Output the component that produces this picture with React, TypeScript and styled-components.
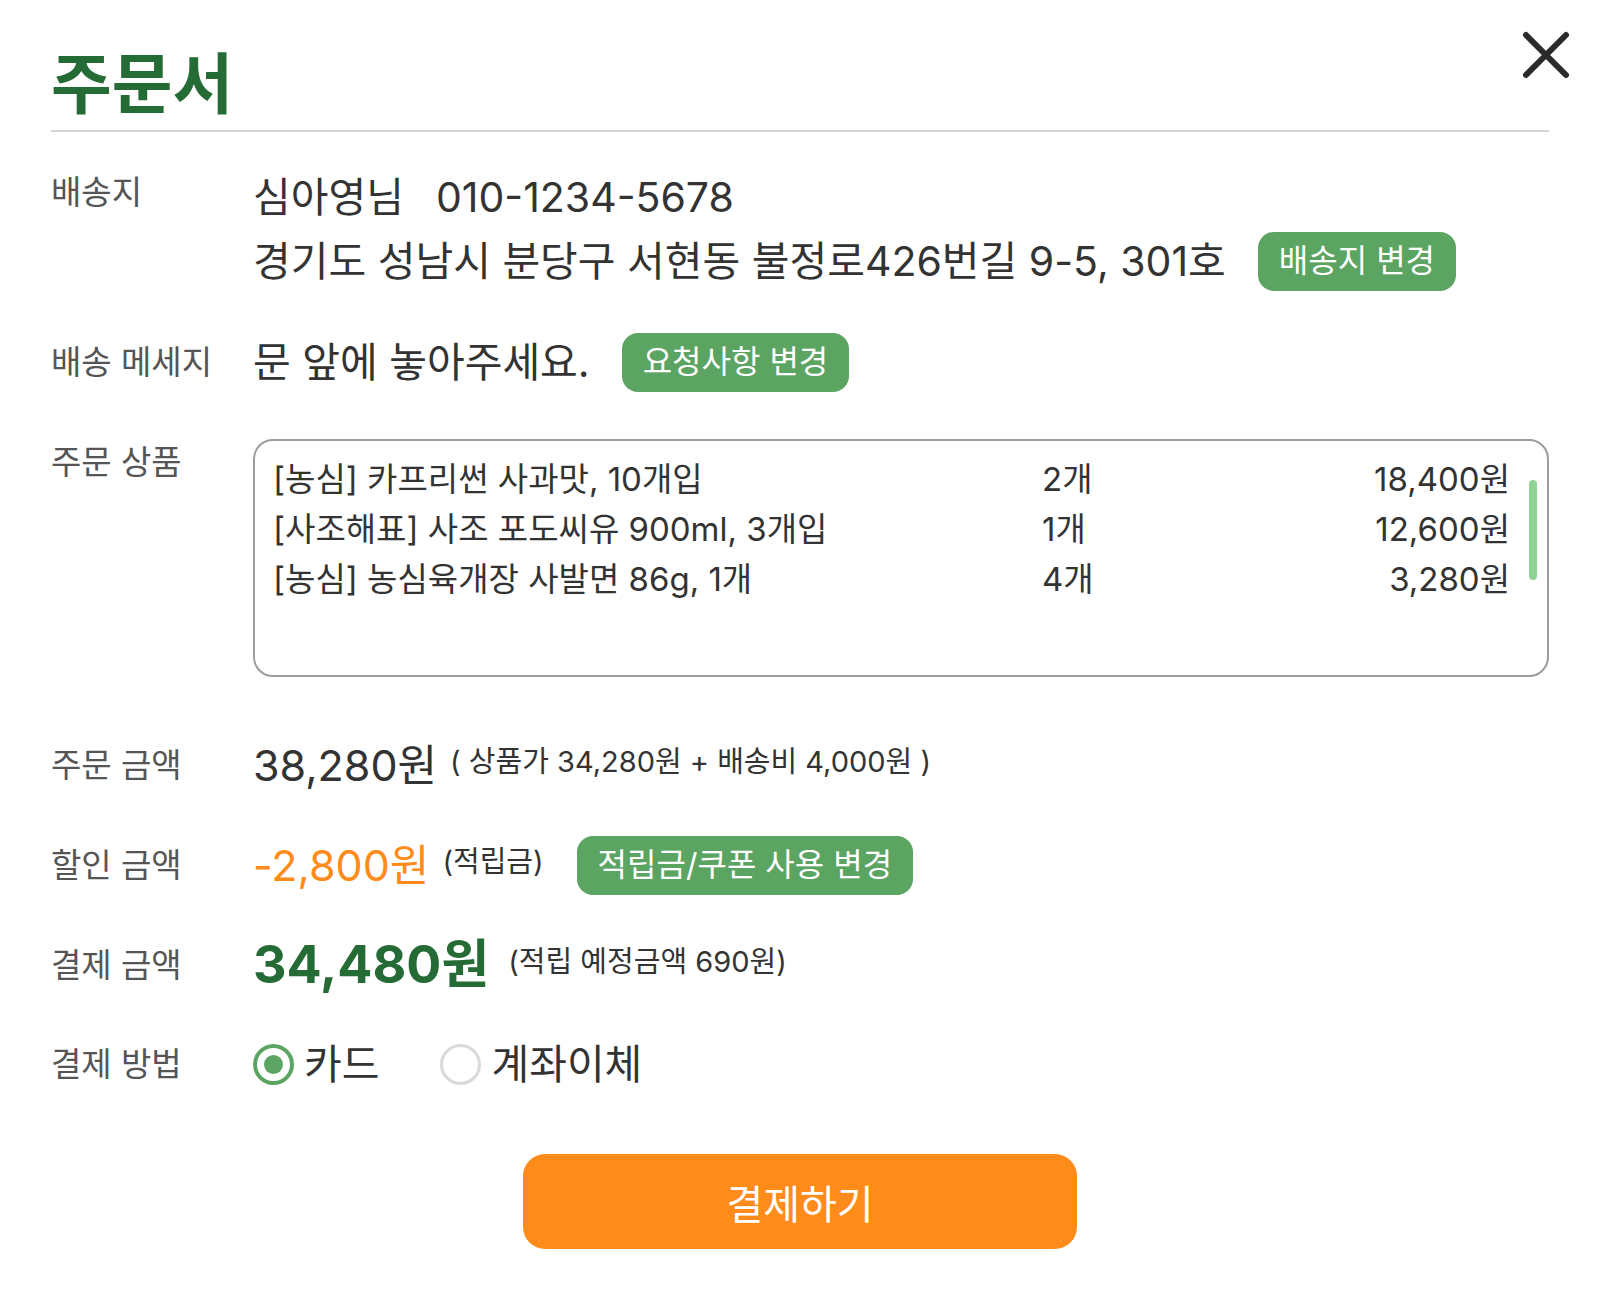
import styled, { createGlobalStyle } from 'styled-components'

const GlobalStyle = createGlobalStyle`
  html,
  body {
    margin: 0;
    background: #fff;
  }

  body {
    font-family: "Inter", "Noto Sans CJK KR", "Noto Sans", sans-serif;
    color: #333;
  }

  * {
    box-sizing: border-box;
  }
`

const Sheet = styled.div`
  position: relative;
  width: 1600px;
  min-height: 1300px;
  padding: 0 51px;
`

const Header = styled.header`
  padding: 46px 0 18px;
  border-bottom: 2px solid #d6d6d6;
`

const Title = styled.h1`
  margin: 0;
  font-family: "Noto Sans CJK KR", sans-serif;
  font-size: 66px;
  line-height: 66px;
  font-weight: 700;
  color: #256b35;
`

const CloseButton = styled.button`
  position: absolute;
  top: 31px;
  right: 30px;
  width: 48px;
  height: 48px;
  padding: 0;
  border: none;
  background: transparent;
  cursor: pointer;

  > svg {
    display: block;
  }
`

const Form = styled.div`
  display: flex;
  flex-direction: column;
  padding-top: 33px;
`

const Row = styled.div<{ $gap?: number }>`
  display: flex;
  align-items: flex-start;
  margin-top: ${({ $gap }) => $gap ?? 0}px;
`

const Label = styled.div<{ $lh?: number }>`
  width: 202px;
  flex-shrink: 0;
  font-size: 33px;
  line-height: ${({ $lh }) => $lh ?? 64}px;
  color: #555;
`

const Value = styled.div`
  flex: 1;
  display: flex;
  flex-direction: column;
  font-size: 41px;
  line-height: 64px;
  color: #333;
`

const Line = styled.div<{ $gap?: number }>`
  display: flex;
  align-items: center;
  gap: ${({ $gap }) => $gap ?? 32}px;
  white-space: nowrap;
`

const GreenButton = styled.button<{ $push?: number }>`
  height: 59px;
  padding: 0 21px;
  margin-left: ${({ $push }) => $push ?? 0}px;
  border: none;
  border-radius: 16px;
  background: #5ba462;
  color: #fff;
  font-family: inherit;
  font-size: 32px;
  line-height: 1;
  white-space: nowrap;
  cursor: pointer;
`

const ItemBox = styled.div`
  flex: 1;
  height: 238px;
  display: flex;
  gap: 19px;
  padding: 13px 10px 0 18px;
  border: 2px solid #9d9d9d;
  border-radius: 20px;
`

const ItemList = styled.div`
  flex: 1;
  display: grid;
  grid-template-columns: 769px 1fr auto;
  align-content: start;
  font-size: 33px;
  line-height: 50px;
  color: #333;

  > span:nth-child(3n) {
    text-align: right;
  }
`

const ScrollThumb = styled.div`
  width: 8px;
  height: 100px;
  margin-top: 26px;
  border-radius: 4px;
  background: #8fd394;
`

const Amount = styled.span<{ $tone?: 'plain' | 'discount' | 'total' }>`
  font-size: ${({ $tone }) => ($tone === 'total' ? 52 : 43)}px;
  font-weight: ${({ $tone }) => ($tone === 'total' ? 700 : 400)};
  color: ${({ $tone }) =>
    $tone === 'discount' ? '#ff8c1a' : $tone === 'total' ? '#256b35' : '#333'};
`

const Note = styled.span`
  font-size: 29px;
  color: #333;
  position: relative;
  top: -3px;
`

const RadioGroup = styled.div`
  display: flex;
  align-items: center;
  gap: 61px;
  font-size: 41px;
  line-height: 64px;
  color: #333;
`

const RadioOption = styled.label`
  display: flex;
  align-items: center;
  gap: 10px;
  cursor: pointer;
`

const RadioMark = styled.span<{ $checked?: boolean }>`
  position: relative;
  width: 41px;
  height: 41px;
  border-radius: 50%;
  border: ${({ $checked }) => ($checked ? '4px solid #5ba462' : '3px solid #d9d9d9')};

  &::after {
    content: '';
    display: ${({ $checked }) => ($checked ? 'block' : 'none')};
    position: absolute;
    inset: 7px;
    border-radius: 50%;
    background: #5ba462;
  }
`

const PayButton = styled.button`
  display: block;
  width: 554px;
  height: 95px;
  margin: 58px auto 0;
  border: none;
  border-radius: 22px;
  background: #ff8c1a;
  color: #fff;
  font-family: inherit;
  font-size: 40px;
  cursor: pointer;
`

const items = [
  { name: '[농심] 카프리썬 사과맛, 10개입', qty: '2개', price: '18,400원' },
  { name: '[사조해표] 사조 포도씨유 900ml, 3개입', qty: '1개', price: '12,600원' },
  { name: '[농심] 농심육개장 사발면 86g, 1개', qty: '4개', price: '3,280원' },
]

export default function App() {
  return (
    <Sheet>
      <GlobalStyle />
      <Header>
        <Title>주문서</Title>
      </Header>
      <CloseButton aria-label="닫기">
        <svg width="48" height="48" viewBox="0 0 48 48">
          <path
            d="M4 4 L44 44 M44 4 L4 44"
            stroke="#2a2a2a"
            strokeWidth="6"
            strokeLinecap="round"
          />
        </svg>
      </CloseButton>

      <Form>
        <Row>
          <Label $lh={54}>배송지</Label>
          <Value>
            <Line>
              <span>심아영님</span>
              <span>010-1234-5678</span>
            </Line>
            <Line>
              <span>경기도 성남시 분당구 서현동 불정로426번길 9-5, 301호</span>
              <GreenButton>배송지 변경</GreenButton>
            </Line>
          </Value>
        </Row>

        <Row $gap={37}>
          <Label>배송 메세지</Label>
          <Value>
            <Line>
              <span>문 앞에 놓아주세요.</span>
              <GreenButton>요청사항 변경</GreenButton>
            </Line>
          </Value>
        </Row>

        <Row $gap={45}>
          <Label $lh={46}>주문 상품</Label>
          <ItemBox>
            <ItemList>
              {items.map((item) => [
                <span key={`${item.name}-n`}>{item.name}</span>,
                <span key={`${item.name}-q`}>{item.qty}</span>,
                <span key={`${item.name}-p`}>{item.price}</span>,
              ])}
            </ItemList>
            <ScrollThumb />
          </ItemBox>
        </Row>

        <Row $gap={56}>
          <Label>주문 금액</Label>
          <Value>
            <Line $gap={13}>
              <Amount>38,280원</Amount>
              <Note>( 상품가 34,280원 + 배송비 4,000원 )</Note>
            </Line>
          </Value>
        </Row>

        <Row $gap={36}>
          <Label>할인 금액</Label>
          <Value>
            <Line $gap={13}>
              <Amount $tone="discount">-2,800원</Amount>
              <Note>(적립금)</Note>
              <GreenButton $push={20}>적립금/쿠폰 사용 변경</GreenButton>
            </Line>
          </Value>
        </Row>

        <Row $gap={36}>
          <Label>결제 금액</Label>
          <Value>
            <Line $gap={19}>
              <Amount $tone="total">34,480원</Amount>
              <Note>(적립 예정금액 690원)</Note>
            </Line>
          </Value>
        </Row>

        <Row $gap={35}>
          <Label>결제 방법</Label>
          <RadioGroup>
            <RadioOption>
              <RadioMark $checked />
              카드
            </RadioOption>
            <RadioOption>
              <RadioMark />
              계좌이체
            </RadioOption>
          </RadioGroup>
        </Row>
      </Form>

      <PayButton>결제하기</PayButton>
    </Sheet>
  )
}
